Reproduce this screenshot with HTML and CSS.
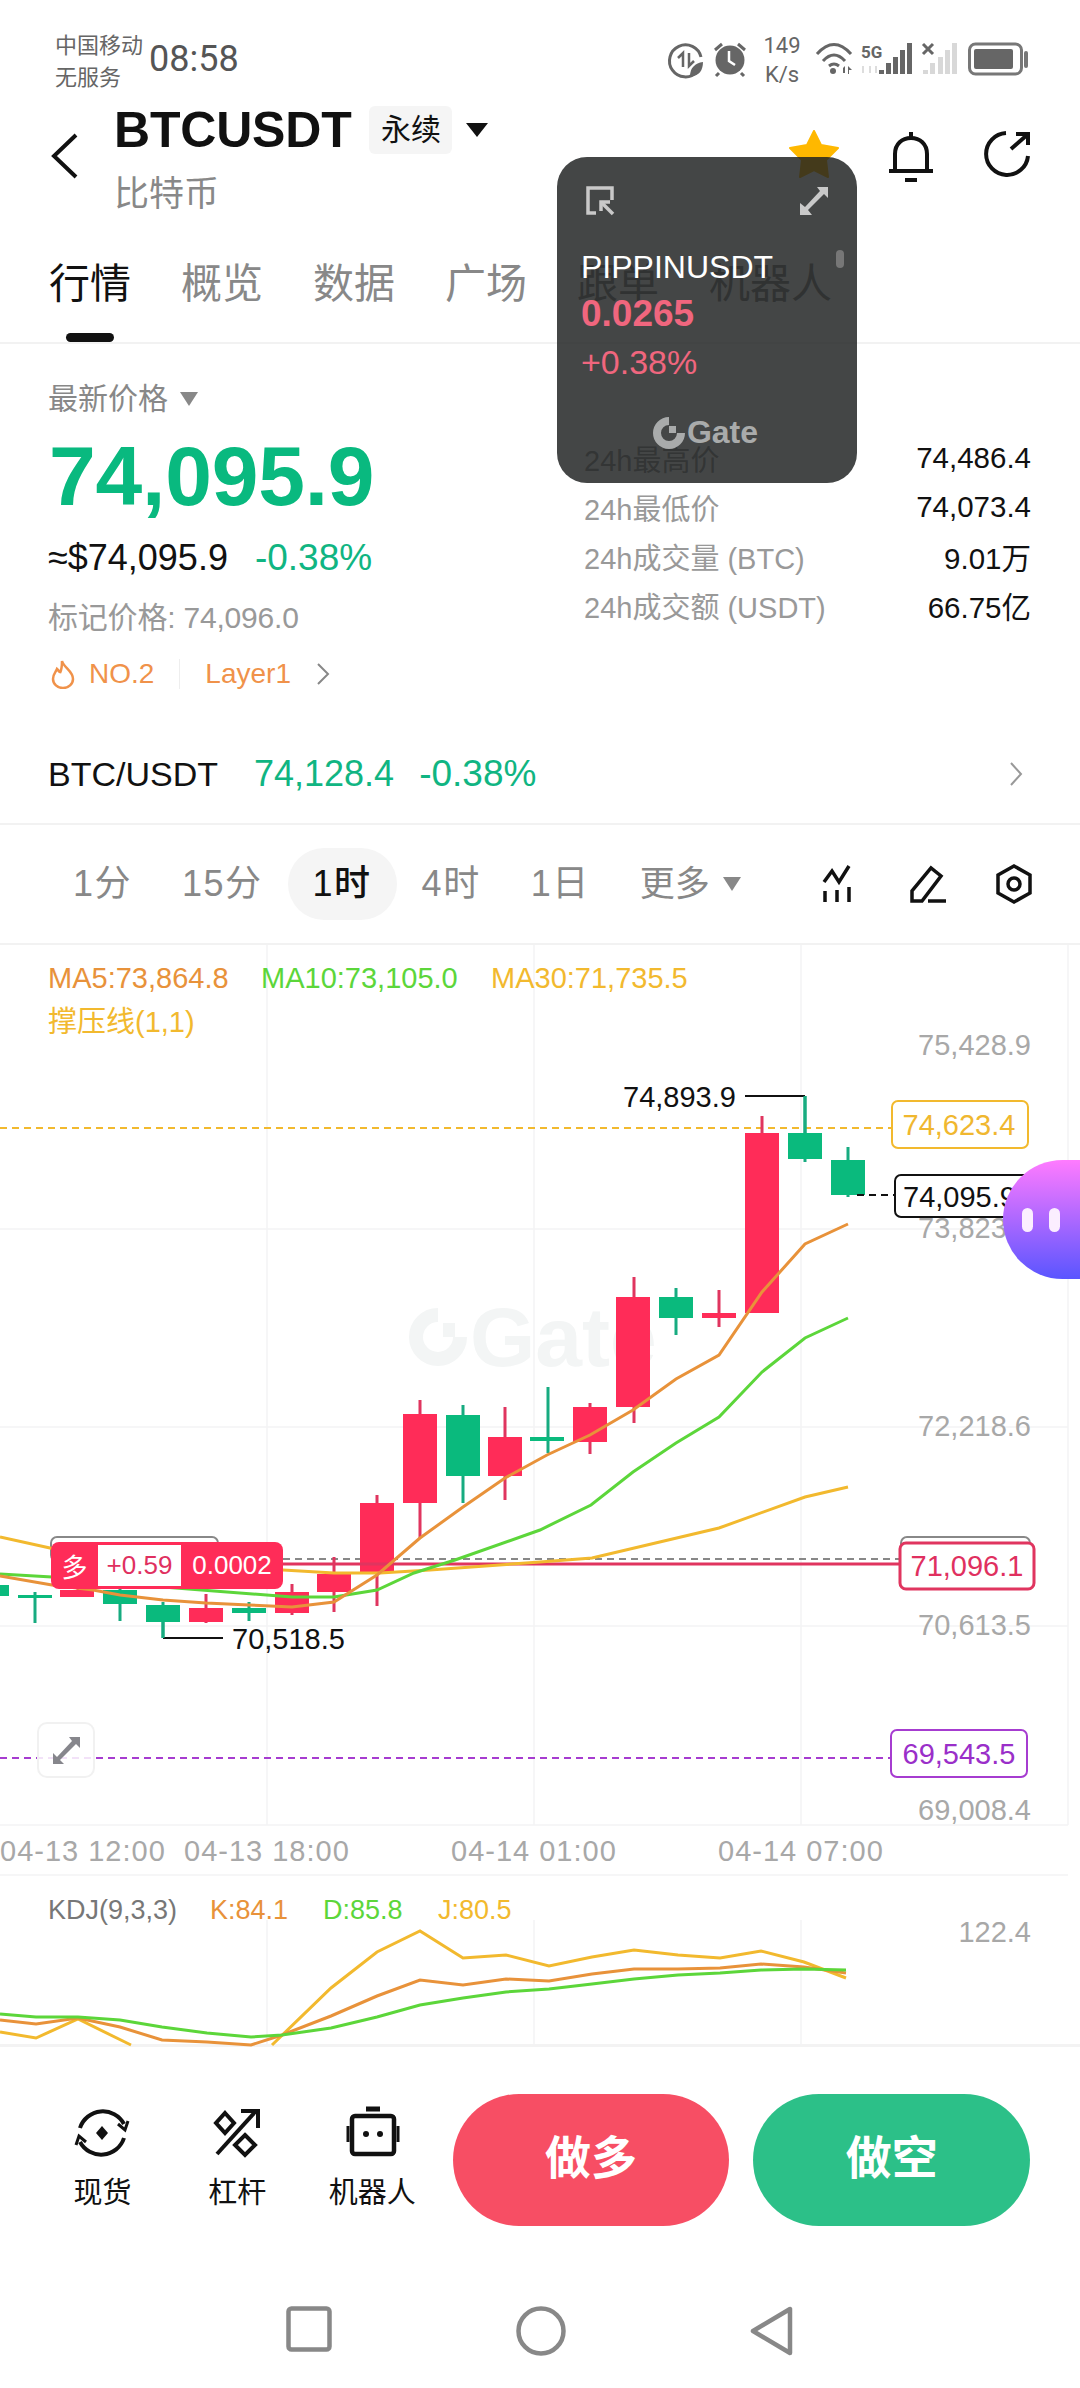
FILE: index.html
```html
<!DOCTYPE html>
<html lang="zh-CN">
<head>
    <meta charset="UTF-8">
    <meta name="viewport" content="width=device-width, initial-scale=1.0">
    <title>BTCUSDT 永续</title>
    <link rel="stylesheet" href="styles.css">
</head>
<body>
<div class="page">

    <div class="status-bar">
        <div class="carrier"><span>中国移动</span><span>无服务</span></div>
        <div class="clock">08:58</div>
        <svg class="status-icons" viewBox="660 30 372 60" width="372" height="60">
            <g class="si-stroke">
                <path d="M697 72A16 16 0 1 1 701 57"/>
                <path d="M683 67V53L678 58" stroke-width="2.5"/>
                <path d="M689 53V66L694 61" stroke-width="2.5"/>
            </g>
            <path class="si-fill" d="M690 76C690 68 695 63 703 62C703 71 698 77 690 76Z"/>
            <g class="si-stroke">
                <path d="M715 50L722 44M745 50L738 44"/>
                <path d="M719 73L716 76M741 73L744 76"/>
            </g>
            <circle class="si-fill" cx="730" cy="60" r="14.5"/>
            <path d="M729 51V61L735 65" fill="none" stroke="#fff" stroke-width="2.5"/>
            <text class="si-text" x="782" y="53" text-anchor="middle">149</text>
            <text class="si-text" x="782" y="82" text-anchor="middle">K/s</text>
            <g class="si-stroke" stroke-width="3.5">
                <path d="M817 54Q834 35 851 54"/>
                <path d="M823 61Q834 49 845 61"/>
                <path d="M829 66Q834 62 839 66"/>
            </g>
            <circle class="si-fill" cx="833" cy="71" r="3"/>
            <path class="si-fill" d="M843 73V68L845 66V73ZM848 66L852 70H849V74H848Z"/>
            <text class="si-five" x="861" y="58">5G</text>
            <path d="M863 66V73M870 66V73M876 66V73" stroke="#ddd" stroke-width="2"/>
            <path class="si-fill" d="M879 70h5v4h-5zM886 63h5v11h-5zM893 57h5v17h-5zM900 50h5v24h-5zM907 43h5v31h-5z"/>
            <path d="M923 44L933 54M933 44L923 54" stroke="#666" stroke-width="3"/>
            <path class="si-light" d="M923 70h5v4h-5zM930 63h5v11h-5zM938 57h5v17h-5zM945 50h5v24h-5zM952 43h5v31h-5z"/>
            <rect x="969.5" y="44" width="52" height="30" rx="6" fill="none" stroke="#777" stroke-width="3"/>
            <rect class="si-fill" x="974" y="49" width="39" height="20" rx="2"/>
            <rect x="1024" y="51" width="4" height="17" rx="2" fill="#777"/>
        </svg>
    </div>

    <header class="header">
        <svg class="back" width="30" height="48" viewBox="0 0 30 48"><path d="M26 3L4 24L26 45" fill="none" stroke="#111" stroke-width="4"/></svg>
        <div class="title-block">
            <div class="title-row">
                <span class="symbol">BTCUSDT</span>
                <span class="contract">永续</span>
                <span class="caret caret-dark"></span>
            </div>
            <div class="coin-name">比特币</div>
        </div>
        <div class="header-actions">
            <svg width="50" height="48" viewBox="0 0 50 48"><path d="M25 1L32 15L49 18L37 30L39 47L25 40L11 47L13 30L1 18L18 15Z" fill="#ffb800" stroke="#ffb800" stroke-linejoin="round" stroke-width="2"/></svg>
            <svg width="48" height="54" viewBox="0 0 48 54" fill="none" stroke="#111" stroke-width="4"><path d="M2 41H46"/><path d="M8 41V24C8 14 15 8 24 8S40 14 40 24V41"/><path d="M24 2V8"/><path d="M18 50H30"/></svg>
            <svg width="50" height="50" viewBox="0 0 50 50" fill="none" stroke="#111" stroke-width="4"><path d="M23 3A21 21 0 1 0 45 26"/><path d="M28 19L44 5"/><path d="M33 4H45V15"/></svg>
        </div>
    </header>

    <nav class="tabs">
        <a class="tab active">行情</a>
        <a class="tab">概览</a>
        <a class="tab">数据</a>
        <a class="tab">广场</a>
        <a class="tab">跟单</a>
        <a class="tab">机器人</a>
    </nav>

    <section class="info">
        <div class="info-left">
            <div class="last-label">最新价格 <span class="caret caret-gray"></span></div>
            <div class="last-price">74,095.9</div>
            <div class="fiat-row"><span>≈$74,095.9</span><span class="green">-0.38%</span></div>
            <div class="mark-price">标记价格: 74,096.0</div>
            <div class="tags">
                <svg width="24" height="30" viewBox="0 0 24 30" fill="none" stroke="#f0924a" stroke-width="2.5"><path d="M11 2C13 9 22 12 22 20A10 9 0 0 1 2 20C2 15 5 13 6 10C8 12 9 13 9 14C11 10 11 6 11 2Z"/></svg>
                <span class="tag-no">NO.2</span>
                <span class="tag-line"></span>
                <span class="tag-sector">Layer1</span>
                <svg width="14" height="24" viewBox="0 0 14 24"><path d="M2 2L12 12L2 22" fill="none" stroke="#888" stroke-width="2"/></svg>
            </div>
        </div>
        <dl class="stats">
            <div class="stat"><dt>24h最高价</dt><dd>74,486.4</dd></div>
            <div class="stat"><dt>24h最低价</dt><dd>74,073.4</dd></div>
            <div class="stat"><dt>24h成交量 (BTC)</dt><dd>9.01万</dd></div>
            <div class="stat"><dt>24h成交额 (USDT)</dt><dd>66.75亿</dd></div>
        </dl>
    </section>

    <div class="pair-row">
        <span class="pair-name">BTC/USDT</span>
        <span class="pair-price green">74,128.4</span>
        <span class="pair-change green">-0.38%</span>
        <svg class="pair-arrow" width="14" height="26" viewBox="0 0 14 26"><path d="M2 2L12 13L2 24" fill="none" stroke="#999" stroke-width="2"/></svg>
    </div>

    <div class="timeframes">
        <a class="tf">1分</a>
        <a class="tf">15分</a>
        <a class="tf current">1时</a>
        <a class="tf">4时</a>
        <a class="tf">1日</a>
        <a class="tf tf-more">更多</a>
        <span class="caret caret-gray"></span>
        <div class="tools">
            <svg width="38" height="38" viewBox="0 0 38 38" fill="none" stroke="#111" stroke-width="3.5"><path d="M2 17L10 6L17 17L27 1"/><path d="M3 26V37M15 25V37M27 22V37"/></svg>
            <svg width="40" height="38" viewBox="0 0 40 38" fill="none" stroke="#111" stroke-width="3.5"><path d="M4 36V26L23 3L33 11L14 36Z"/><path d="M20 36H38"/></svg>
            <svg width="36" height="40" viewBox="0 0 36 40" fill="none" stroke="#111" stroke-width="3.5"><path d="M18 2L34 11V29L18 38L2 29V11Z"/><circle cx="18" cy="20" r="6"/></svg>
        </div>
    </div>

    <section class="chart">
        <svg class="chart-svg" viewBox="0 945 1080 1102" width="1080" height="1102">
            <g class="watermark">
                <path d="M438 1315A22 22 0 1 0 460 1337" fill="none" stroke="#f3f5f5" stroke-width="14"/>
                <rect x="443" y="1323" width="12" height="14" fill="#f3f5f5"/>
                <text class="wm-text" x="470" y="1366">Gate</text>
            </g>

            <path class="grid" d="M267 945V1825M534 945V1825M801 945V1825M1068 945V1825M0 1229H1068M0 1427H1068M0 1626H1068M0 1825H1068"/>
            <path class="grid" d="M0 1875H1068M267 1920V2045M534 1920V2045M801 1920V2045"/>

            <text class="axis" x="1031" y="1055" text-anchor="end">75,428.9</text>
            <text class="axis" x="1031" y="1238" text-anchor="end">73,823.3</text>
            <text class="axis" x="1031" y="1436" text-anchor="end">72,218.6</text>
            <text class="axis" x="1031" y="1635" text-anchor="end">70,613.5</text>
            <text class="axis" x="1031" y="1820" text-anchor="end">69,008.4</text>

            <text class="time" x="0" y="1861">04-13 12:00</text>
            <text class="time" x="184" y="1861">04-13 18:00</text>
            <text class="time" x="451" y="1861">04-14 01:00</text>
            <text class="time" x="718" y="1861">04-14 07:00</text>

            <text class="legend ma5" x="48" y="988">MA5:73,864.8</text>
            <text class="legend ma10" x="261" y="988">MA10:73,105.0</text>
            <text class="legend ma30" x="491" y="988">MA30:71,735.5</text>
            <text class="legend ma30" x="48" y="1032">撑压线(1,1)</text>

            <path class="dash-yellow" d="M0 1128H892"/>
            <path class="dash-purple" d="M0 1758H892"/>
            <path class="dash-gray" d="M283 1559H901"/>

            <rect class="ghost" x="51" y="1537" width="167" height="24" rx="6"/>
            <rect class="ghost" x="901" y="1537" width="129" height="24" rx="6"/>

            <!-- candles -->
            <path class="wick-up" d="M505 1407V1500M420 1400V1538M377 1495V1606M334 1557V1612M292 1584V1615M206 1594V1623M78 1580V1597M634 1277V1423M590 1403V1454M719 1290V1327M762 1116V1313"/>
            <path class="wick-down" d="M848 1147V1197M805 1096V1162M676 1288V1335M548 1387V1453M463 1405V1503M249 1602V1621M163 1602V1638M120 1585V1621M35 1592V1623"/>
            <g class="body-up">
                <rect x="745" y="1133" width="34" height="180"/>
                <rect x="702" y="1313" width="34" height="5"/>
                <rect x="616" y="1297" width="34" height="110"/>
                <rect x="573" y="1407" width="34" height="35"/>
                <rect x="488" y="1437" width="34" height="39"/>
                <rect x="403" y="1414" width="34" height="89"/>
                <rect x="360" y="1503" width="34" height="69"/>
                <rect x="317" y="1574" width="34" height="18"/>
                <rect x="275" y="1592" width="34" height="21"/>
                <rect x="189" y="1608" width="34" height="14"/>
                <rect x="60" y="1590" width="34" height="7"/>
            </g>
            <g class="body-down">
                <rect x="831" y="1160" width="34" height="35"/>
                <rect x="788" y="1133" width="34" height="26"/>
                <rect x="659" y="1297" width="34" height="21"/>
                <rect x="530" y="1437" width="34" height="4"/>
                <rect x="446" y="1415" width="34" height="61"/>
                <rect x="232" y="1608" width="34" height="5"/>
                <rect x="146" y="1605" width="34" height="17"/>
                <rect x="103" y="1590" width="34" height="14"/>
                <rect x="18" y="1595" width="34" height="3"/>
                <rect x="-25" y="1585" width="34" height="11"/>
            </g>

            <path class="red-line" d="M283 1564H900"/>

            <polyline class="line l-ma30" points="0,1537 50,1548 120,1562 200,1568 283,1570 334,1573 380,1573 430,1570 540,1562 592,1558 719,1528 805,1497 848,1487"/>
            <polyline class="line l-ma10" points="0,1574 52,1577 163,1587 214,1591 292,1597 334,1597 377,1590 414,1573 455,1560 540,1530 591,1505 633,1472 676,1443 719,1417 762,1372 805,1338 848,1318"/>
            <polyline class="line l-ma5" points="0,1576 52,1585 93,1590 120,1595 163,1600 206,1603 249,1605 292,1607 334,1602 377,1575 420,1538 463,1507 505,1478 547,1455 590,1435 633,1410 676,1379 719,1355 762,1292 805,1244 848,1224"/>

            <!-- high and low marks -->
            <path class="leader" d="M745 1096H805M163 1638H223"/>
            <path class="wick-down" d="M805 1096V1133M163 1622V1638"/>
            <text class="mark" x="623" y="1107">74,893.9</text>
            <text class="mark" x="232" y="1649">70,518.5</text>

            <!-- price tags on the right -->
            <rect class="tag-box tb-yellow" x="892" y="1101" width="136" height="47" rx="6"/>
            <text class="tag-text tt-yellow" x="959" y="1135" text-anchor="middle">74,623.4</text>
            <path class="dash-black" d="M857 1195H895"/>
            <rect class="tag-box tb-black" x="895" y="1175" width="136" height="42" rx="6"/>
            <text class="tag-text tt-black" x="903" y="1207">74,095.9</text>
            <rect class="tag-box tb-red" x="900" y="1543" width="134" height="46" rx="6"/>
            <text class="tag-text tt-red" x="967" y="1576" text-anchor="middle">71,096.1</text>
            <rect class="tag-box tb-purple" x="891" y="1730" width="136" height="47" rx="6"/>
            <text class="tag-text tt-purple" x="959" y="1764" text-anchor="middle">69,543.5</text>

            <!-- KDJ -->
            <text class="kdj k-label" x="48" y="1919">KDJ(9,3,3)</text>
            <text class="kdj ma5" x="210" y="1919">K:84.1</text>
            <text class="kdj ma10" x="323" y="1919">D:85.8</text>
            <text class="kdj ma30" x="438" y="1919">J:80.5</text>
            <text class="axis" x="1031" y="1942" text-anchor="end">122.4</text>
            <polyline class="line l-ma30" points="0,2032 36,2038 78,2019 131,2045"/>
            <polyline class="line l-ma30" points="272,2045 331,1988 377,1952 420,1931 463,1958 506,1955 549,1966 592,1957 634,1950 678,1955 720,1958 761,1951 804,1962 846,1978"/>
            <polyline class="line l-ma5" points="0,2020 36,2024 78,2018 120,2027 162,2040 207,2042 251,2045 282,2035 331,2016 377,1996 420,1980 463,1985 506,1979 549,1981 592,1974 634,1969 678,1969 720,1968 761,1964 804,1967 846,1973"/>
            <polyline class="line l-ma10" points="0,2014 36,2017 78,2017 120,2020 162,2027 207,2033 251,2037 282,2035 331,2028 377,2017 420,2005 463,1998 506,1992 549,1989 592,1984 634,1979 678,1975 720,1973 761,1970 804,1969 846,1970"/>
        </svg>

        <div class="position-badge">
            <span class="pb-side">多</span>
            <span class="pb-pnl">+0.59</span>
            <span class="pb-size">0.0002</span>
        </div>

        <button class="fullscreen">
            <svg width="30" height="30" viewBox="0 0 30 30" fill="#86868c"><path d="M18 2H29V13L25 9L9 25L13 29H2V18L6 22L21 6Z"/></svg>
        </button>

        <div class="assistant"><i></i><i></i></div>
    </section>

    <div class="trade-bar">
        <a class="shortcut">
            <svg width="56" height="54" viewBox="0 0 56 54" fill="none" stroke="#111" stroke-width="4"><path d="M6 22A24 24 0 0 1 50 18"/><path d="M50 32A24 24 0 0 1 6 36"/><path d="M44 18L51 24L54 15" stroke-width="3"/><path d="M12 36L5 30L2 39" stroke-width="3"/><path d="M28 20L34 27L28 34L22 27Z" fill="#111" stroke="none"/></svg>
            <span>现货</span>
        </a>
        <a class="shortcut">
            <svg width="56" height="54" viewBox="0 0 56 54" fill="none" stroke="#111" stroke-width="4"><path d="M8 48L46 6"/><path d="M32 5H49V22"/><path d="M16 7L25 17L16 27L7 17Z"/><path d="M36 29L46 39L36 49L26 39Z"/></svg>
            <span>杠杆</span>
        </a>
        <a class="shortcut">
            <svg width="56" height="54" viewBox="0 0 56 54" fill="none" stroke="#111" stroke-width="4.5"><rect x="8" y="10" width="42" height="38" rx="3"/><path d="M22 3H36" stroke-width="5"/><path d="M4 20V36M54 20V36" stroke-width="3"/><circle cx="22" cy="28" r="3" fill="#111" stroke="none"/><circle cx="36" cy="28" r="3" fill="#111" stroke="none"/></svg>
            <span>机器人</span>
        </a>
        <a class="trade-btn long">做多</a>
        <a class="trade-btn short">做空</a>
    </div>

    <div class="nav-bar">
        <svg width="46" height="46" viewBox="0 0 46 46"><rect x="2.5" y="2.5" width="41" height="41" rx="3" fill="none" stroke="#888" stroke-width="4.5"/></svg>
        <svg width="50" height="50" viewBox="0 0 50 50"><circle cx="25" cy="25" r="22.5" fill="none" stroke="#888" stroke-width="4.5"/></svg>
        <svg width="44" height="50" viewBox="0 0 44 50"><path d="M40 3V47L3 25Z" fill="none" stroke="#888" stroke-width="4.5" stroke-linejoin="round"/></svg>
    </div>

    <aside class="mini-card">
        <div class="mini-top">
            <svg width="30" height="30" viewBox="0 0 30 30" fill="none" stroke="#c9c9c9" stroke-width="3.5"><path d="M11 27H3V2H27V14"/><path d="M28 28L16 16"/><path d="M16 25V16H25"/></svg>
            <svg width="30" height="30" viewBox="0 0 30 30" fill="#c9c9c9"><path d="M18 1H29V12L25 8L9 24L13 29H1V17L6 21L21 5Z"/></svg>
        </div>
        <div class="mini-symbol">PIPPINUSDT</div>
        <div class="mini-price">0.0265</div>
        <div class="mini-change">+0.38%</div>
        <div class="mini-brand">
            <svg width="34" height="34" viewBox="0 0 34 34"><path d="M17 5A12 12 0 1 0 29 17" fill="none" stroke="#a9abab" stroke-width="8"/><rect x="17" y="10" width="7" height="7" fill="#a9abab"/></svg>
            <span>Gate</span>
        </div>
        <span class="mini-scroll"></span>
    </aside>

</div>
</body>
</html>
```

FILE: styles.css
```css
* {
    box-sizing: border-box;
}
body {
    margin: 0;
    background: #fff;
    font-family: "Liberation Sans", "Noto Sans CJK SC", sans-serif;
    color: #111;
}
svg {
    display: block;
}
a {
    color: inherit;
    text-decoration: none;
}
.page {
    position: relative;
    width: 1080px;
    height: 2388px;
    overflow: hidden;
}
.green {
    color: #10b582;
}

/* status bar */
.status-bar {
    height: 100px;
    display: flex;
    align-items: flex-start;
    padding: 30px 48px 0 55px;
}
.carrier {
    display: flex;
    flex-direction: column;
    font-size: 22px;
    line-height: 32px;
    color: #666;
}
.clock {
    margin: 13px 0 0 6px;
    font-family: Roboto, sans-serif;
    font-size: 36px;
    line-height: 32px;
    color: #555;
}
.status-icons {
    margin-left: auto;
}
.si-stroke {
    fill: none;
    stroke: #666;
    stroke-width: 3;
}
.si-fill {
    fill: #666;
}
.si-light {
    fill: #d8d8d8;
}
.si-text {
    font-family: Roboto, sans-serif;
    font-size: 22px;
    fill: #666;
}
.si-five {
    font-family: Roboto, sans-serif;
    font-size: 17px;
    font-weight: bold;
    fill: #666;
}

/* header */
.header {
    height: 122px;
    display: flex;
    align-items: flex-start;
    padding-right: 47px;
    position: relative;
}
.back {
    margin: 32px 0 0 50px;
}
.title-block {
    margin-left: 34px;
}
.title-row {
    display: flex;
    align-items: center;
    height: 56px;
    margin-top: 2px;
}
.symbol {
    font-size: 50px;
    font-weight: bold;
    letter-spacing: -0.2px;
}
.contract {
    margin-left: 18px;
    width: 83px;
    height: 48px;
    background: #f5f5f5;
    border-radius: 6px;
    font-size: 30px;
    line-height: 48px;
    text-align: center;
}
.caret {
    display: inline-block;
    width: 0;
    height: 0;
    border-style: solid;
    border-color: transparent;
    border-bottom-width: 0;
}
.caret-dark {
    margin-left: 14px;
    border-width: 14px 11px 0;
    border-top-color: #111;
}
.caret-gray {
    border-width: 14px 9px 0;
    border-top-color: #888;
}
.coin-name {
    margin-top: 16px;
    font-size: 35px;
    line-height: 40px;
    color: #888;
}
.header-actions {
    margin-left: auto;
    display: flex;
    align-items: flex-start;
    gap: 48px;
    padding-top: 30px;
}

/* tabs */
.tabs {
    height: 122px;
    display: flex;
    gap: 50px;
    padding: 39px 0 0 49px;
    border-bottom: 2px solid #f2f2f2;
}
.tab {
    position: relative;
    height: 46px;
    font-size: 41px;
    line-height: 46px;
    color: #888;
}
.tab.active {
    color: #111;
}
.tab.active::after {
    content: "";
    position: absolute;
    left: 17px;
    right: 17px;
    top: 72px;
    height: 9px;
    border-radius: 5px;
    background: #111;
}

/* price block */
.info {
    height: 381px;
    display: flex;
    justify-content: space-between;
    padding: 0 49px 0 48px;
}
.last-label {
    margin-top: 35px;
    display: flex;
    align-items: center;
    gap: 12px;
    font-size: 30px;
    line-height: 40px;
    color: #888;
}
.last-price {
    margin-top: 12px;
    margin-left: 1px;
    font-size: 84px;
    font-weight: bold;
    line-height: 90px;
    letter-spacing: -0.2px;
    color: #09b97f;
}
.fiat-row {
    margin-top: 15px;
    display: flex;
    gap: 27px;
    font-size: 36px;
    line-height: 44px;
}
.fiat-row .green {
    font-size: 37px;
}
.mark-price {
    margin-top: 18px;
    font-size: 30px;
    line-height: 40px;
    letter-spacing: -0.2px;
    color: #999;
}
.tags {
    margin-top: 16px;
    display: flex;
    align-items: center;
    height: 40px;
    padding-left: 3px;
    font-size: 28px;
    color: #f0924a;
}
.tag-no {
    margin-left: 14px;
}
.tag-line {
    margin-left: 25px;
    width: 1px;
    height: 30px;
    background: #eee;
}
.tag-sector {
    margin-left: 25px;
}
.tags svg:last-child {
    margin-left: 25px;
}
.stats {
    width: 447px;
    margin: 89px 0 0;
}
.stat {
    display: flex;
    justify-content: space-between;
    align-items: center;
    height: 49px;
    font-size: 29px;
}
.stat dt {
    color: #999;
}
.stat dd {
    margin: 0;
    font-size: 29.5px;
    color: #111;
}

/* pair row */
.pair-row {
    height: 100px;
    display: flex;
    align-items: center;
    padding: 0 57px 0 48px;
    border-bottom: 2px solid #f2f2f2;
    font-size: 34px;
}
.pair-price {
    margin-left: 36px;
    font-size: 36px;
}
.pair-change {
    margin-left: 25px;
    font-size: 37px;
}
.pair-arrow {
    margin-left: auto;
}

/* interval row */
.timeframes {
    height: 120px;
    display: flex;
    align-items: center;
    padding: 0 48px;
    border-bottom: 2px solid #f2f2f2;
}
.tf {
    padding: 0 25px;
    height: 72px;
    font-size: 36px;
    line-height: 72px;
    letter-spacing: 1.5px;
    color: #888;
    border-radius: 36px;
}
.tf.current {
    background: #f5f5f5;
    color: #111;
    font-weight: 500;
}
.tf-more {
    font-size: 35px;
    letter-spacing: 0;
}
.timeframes .caret {
    margin-left: -12px;
}
.tools {
    margin-left: auto;
    display: flex;
    align-items: center;
    gap: 48px;
}

/* chart */
.chart {
    position: relative;
    height: 1102px;
    border-bottom: 3px solid #f3f3f3;
}
.grid {
    fill: none;
    stroke: #f4f4f5;
    stroke-width: 1.5;
}
.wm-text {
    font-size: 84px;
    font-weight: bold;
    fill: #f3f5f5;
}
.axis {
    font-size: 29px;
    fill: #a8a8a8;
}
.time {
    font-size: 29px;
    letter-spacing: 1px;
    fill: #a8a8a8;
}
.legend {
    font-size: 29px;
}
.kdj {
    font-size: 27px;
}
.k-label {
    fill: #777;
}
.ma5 {
    fill: #e8923a;
}
.ma10 {
    fill: #5cd63a;
}
.ma30 {
    fill: #f2b92e;
}
.line {
    fill: none;
    stroke-width: 3;
}
.l-ma5 {
    stroke: #e8923a;
}
.l-ma10 {
    stroke: #5cd63a;
}
.l-ma30 {
    stroke: #f2b92e;
}
.dash-yellow {
    stroke: #f2b92e;
    stroke-width: 2;
    stroke-dasharray: 7 5;
}
.dash-purple {
    stroke: #a63cd0;
    stroke-width: 2;
    stroke-dasharray: 7 5;
}
.dash-gray {
    stroke: #888;
    stroke-width: 2;
    stroke-dasharray: 7 5;
}
.dash-black {
    stroke: #111;
    stroke-width: 2;
    stroke-dasharray: 7 5;
}
.ghost {
    fill: #fff;
    stroke: #888;
    stroke-width: 2;
}
.red-line {
    stroke: #e0355f;
    stroke-width: 3;
}
.wick-up {
    fill: none;
    stroke: #e0355f;
    stroke-width: 3;
}
.wick-down {
    fill: none;
    stroke: #17ab80;
    stroke-width: 3;
}
.body-up {
    fill: #ff2c58;
}
.body-down {
    fill: #0aba7d;
}
.leader {
    fill: none;
    stroke: #111;
    stroke-width: 2;
}
.mark {
    font-size: 29px;
    fill: #111;
}
.tag-box {
    fill: #fff;
    stroke-width: 2;
}
.tag-text {
    font-size: 29px;
}
.tb-yellow {
    stroke: #f2b92e;
}
.tt-yellow {
    fill: #f0b72f;
}
.tb-black {
    stroke: #111;
}
.tt-black {
    fill: #111;
}
.tb-red {
    stroke: #e0355f;
    stroke-width: 3;
}
.tt-red {
    fill: #e0305f;
}
.tb-purple {
    stroke: #a63cd0;
}
.tt-purple {
    fill: #9a2fc9;
}
.position-badge {
    position: absolute;
    left: 51px;
    top: 597px;
    width: 232px;
    height: 47px;
    display: flex;
    align-items: center;
    padding: 3px 0;
    background: #ff2c58;
    border-radius: 8px;
    color: #fff;
    font-size: 26px;
}
.pb-side {
    width: 47px;
    text-align: center;
}
.pb-pnl {
    width: 83px;
    height: 41px;
    line-height: 41px;
    background: #fff;
    color: #e0305f;
    text-align: center;
}
.pb-size {
    flex: 1;
    text-align: center;
}
.fullscreen {
    position: absolute;
    left: 37px;
    top: 777px;
    width: 58px;
    height: 56px;
    display: flex;
    align-items: center;
    justify-content: center;
    padding: 0;
    background: rgba(255, 255, 255, 0.85);
    border: 2px solid #f1f1f1;
    border-radius: 10px;
}
.assistant {
    position: absolute;
    right: 0;
    top: 215px;
    width: 77px;
    height: 119px;
    display: flex;
    align-items: center;
    gap: 16px;
    padding: 0 0 0 19px;
    border-radius: 60px 0 0 60px;
    background: linear-gradient(#ff7bff, #5a55ff);
}
.assistant i {
    width: 11px;
    height: 24px;
    border-radius: 6px;
    background: #fbeeff;
}

/* bottom actions */
.trade-bar {
    height: 223px;
    display: flex;
    align-items: flex-start;
    padding: 47px 50px 0 0;
    position: relative;
}
.shortcut {
    position: relative;
    width: 135px;
    display: flex;
    flex-direction: column;
    align-items: center;
    padding-top: 12px;
    font-size: 29px;
}
.shortcut:first-child {
    margin-left: 35px;
}
.shortcut span {
    margin-top: 16px;
    line-height: 34px;
}
.trade-btn {
    width: 277px;
    height: 132px;
    border-radius: 66px;
    font-size: 46px;
    font-weight: bold;
    line-height: 128px;
    text-align: center;
    color: #fff;
}
.long {
    margin-left: 13px;
    background: #f74e64;
}
.short {
    margin-left: 24px;
    background: #2cc088;
}
.nav-bar {
    height: 118px;
    display: flex;
    align-items: flex-start;
    gap: 184px;
    padding: 36px 0 0 286px;
}

/* floating window */
.mini-card {
    position: absolute;
    left: 557px;
    top: 157px;
    width: 300px;
    height: 326px;
    padding: 29px 28px 0 24px;
    border-radius: 30px;
    background: rgba(30, 32, 33, 0.83);
}
.mini-top {
    display: flex;
    justify-content: space-between;
    padding-left: 4px;
}
.mini-symbol {
    margin-top: 33px;
    font-size: 32px;
    line-height: 36px;
    color: #fff;
}
.mini-price {
    margin-top: 9px;
    font-size: 37px;
    font-weight: bold;
    line-height: 40px;
    color: #f0667e;
}
.mini-change {
    margin-top: 8px;
    font-size: 34px;
    line-height: 40px;
    color: #f0667e;
}
.mini-brand {
    margin-top: 32px;
    display: flex;
    align-items: center;
    justify-content: center;
    gap: 1px;
    font-size: 32px;
    font-weight: bold;
    color: #a9abab;
}
.mini-scroll {
    position: absolute;
    right: 13px;
    top: 93px;
    width: 8px;
    height: 18px;
    border-radius: 4px;
    background: #777;
}
```
